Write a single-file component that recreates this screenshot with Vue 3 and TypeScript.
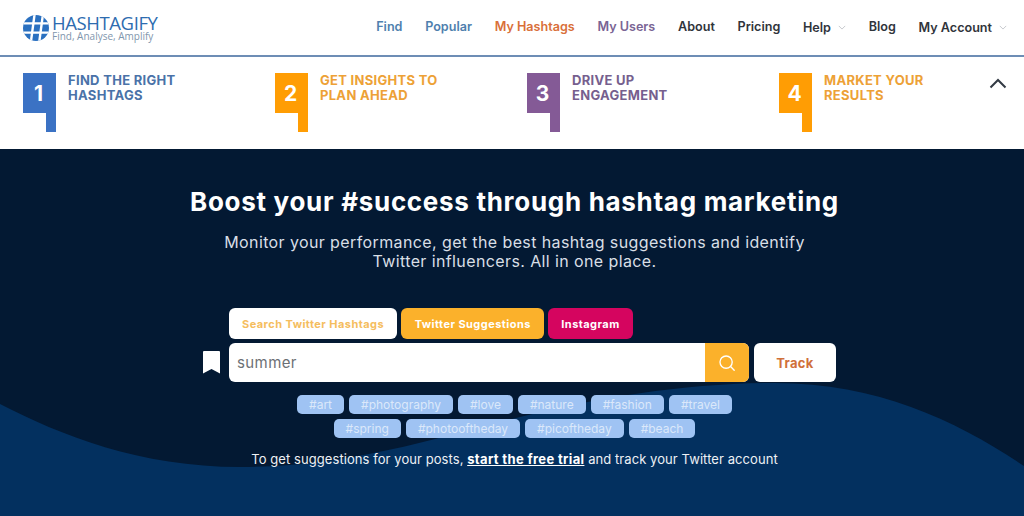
<template>
  <div class="page">
    <header class="topbar">
      <a class="logo">
        <svg class="logo-mark" viewBox="0 0 28 28" width="26" height="26">
          <defs>
            <clipPath id="globe"><circle cx="14" cy="14" r="14" /></clipPath>
          </defs>
          <g clip-path="url(#globe)">
            <rect width="28" height="28" fill="#2a70c0" />
            <path d="M12.5 -1 L8.5 29 M21.5 -1 L17.5 29" stroke="#fff" stroke-width="2.6" />
            <path d="M-1 9 H29 M-1 19 H29" stroke="#fff" stroke-width="2.6" />
          </g>
        </svg>
        <div class="logo-text">
          <span class="logo-name">HASHTAGIFY</span>
          <span class="logo-tag">Find, Analyse, Amplify</span>
        </div>
      </a>
      <nav class="nav">
        <a
          v-for="item in navItems"
          :key="item.label"
          class="nav-item"
          :class="[item.tone, { 'has-caret': item.caret }]"
        >
          {{ item.label }}
          <svg v-if="item.caret" class="caret" viewBox="0 0 10 6" width="8" height="5">
            <path d="M1 1 L5 5 L9 1" fill="none" stroke="#c4c8cc" stroke-width="1.2" />
          </svg>
        </a>
      </nav>
    </header>

    <section class="steps">
      <div v-for="step in steps" :key="step.num" class="step" :class="step.tone">
        <div class="flag">
          <div class="flag-box">{{ step.num }}</div>
          <div class="flag-tail"></div>
        </div>
        <p class="step-text">{{ step.line1 }}<br />{{ step.line2 }}</p>
      </div>
      <svg class="collapse" viewBox="0 0 18 11" width="18" height="11">
        <path d="M1.5 9.5 L9 2 L16.5 9.5" fill="none" stroke="#333a44" stroke-width="2" />
      </svg>
    </section>

    <main class="hero">
      <svg class="wave" viewBox="0 0 1024 133" preserveAspectRatio="none">
        <path
          d="M0 21 C60 52 140 84 240 84 C350 84 430 56 520 34 C600 14 690 0 775 0 C880 0 960 40 1024 83 V133 H0 Z"
          fill="#03305f"
        />
      </svg>
      <div class="hero-inner">
        <h1 class="title">Boost your #success through hashtag marketing</h1>
        <p class="subtitle">
          Monitor your performance, get the best hashtag suggestions and identify<br />
          Twitter influencers. All in one place.
        </p>

        <div class="search">
          <div class="tabs">
            <button class="tab tab-active">Search Twitter Hashtags</button>
            <button class="tab tab-amber">Twitter Suggestions</button>
            <button class="tab tab-pink">Instagram</button>
          </div>
          <div class="search-row">
            <svg class="bookmark" viewBox="0 0 17 23" width="17" height="23">
              <path d="M0 1 Q0 0 1 0 H16 Q17 0 17 1 V22.5 L8.5 18 L0 22.5 Z" fill="#fff" />
            </svg>
            <div class="field">
              <span class="field-text">summer</span>
              <button class="field-btn">
                <svg viewBox="0 0 20 20" width="18" height="18">
                  <circle cx="9" cy="9" r="6.8" fill="none" stroke="#fff" stroke-width="1.5" />
                  <path d="M14 14 L18 18" stroke="#fff" stroke-width="1.5" stroke-linecap="round" />
                </svg>
              </button>
            </div>
            <button class="track">Track</button>
          </div>
        </div>

        <div class="tags">
          <div v-for="(row, i) in tagRows" :key="i" class="tag-row">
            <span v-for="tag in row" :key="tag" class="tag">{{ tag }}</span>
          </div>
        </div>

        <p class="trial">
          To get suggestions for your posts, <a class="trial-link">start the free trial</a> and track your Twitter account
        </p>
      </div>
    </main>
  </div>
</template>

<script setup lang="ts">
const navItems = [
  { label: 'Find', tone: 'blue' },
  { label: 'Popular', tone: 'blue' },
  { label: 'My Hashtags', tone: 'orange' },
  { label: 'My Users', tone: 'purple' },
  { label: 'About', tone: '' },
  { label: 'Pricing', tone: '' },
  { label: 'Help', tone: '', caret: true },
  { label: 'Blog', tone: '' },
  { label: 'My Account', tone: '', caret: true },
]

const steps = [
  { num: 1, line1: 'FIND THE RIGHT', line2: 'HASHTAGS', tone: 'step-blue' },
  { num: 2, line1: 'GET INSIGHTS TO', line2: 'PLAN AHEAD', tone: 'step-amber' },
  { num: 3, line1: 'DRIVE UP', line2: 'ENGAGEMENT', tone: 'step-purple' },
  { num: 4, line1: 'MARKET YOUR', line2: 'RESULTS', tone: 'step-amber' },
]

const tagRows = [
  ['#art', '#photography', '#love', '#nature', '#fashion', '#travel'],
  ['#spring', '#photooftheday', '#picoftheday', '#beach'],
]
</script>

<style>
html,
body {
  margin: 0;
  background: #031933;
}
</style>

<style scoped>
.page {
  width: 1024px;
  height: 516px;
  overflow: hidden;
  font-family: Inter, "Open Sans", sans-serif;
}

.topbar {
  height: 55px;
  display: flex;
  align-items: center;
  justify-content: space-between;
  padding: 0 17px 0 23px;
  background: #fff;
  border-bottom: 2px solid #6d8db5;
}

.logo {
  display: flex;
  align-items: center;
  gap: 3px;
}

.logo-text {
  display: flex;
  flex-direction: column;
}

.logo-name {
  font-family: "Open Sans", sans-serif;
  font-size: 18.5px;
  line-height: 17px;
  letter-spacing: -0.4px;
  color: #2d6cb0;
}

.logo-tag {
  font-family: "Open Sans", sans-serif;
  font-size: 10px;
  line-height: 11px;
  color: #7f96ad;
}

.nav {
  display: flex;
  align-items: center;
  gap: 22.7px;
}

.nav-item {
  font-size: 12.6px;
  font-weight: 600;
  color: #30343b;
  display: flex;
  align-items: center;
  gap: 7px;
  margin-top: -2px;
}

.has-caret {
  margin-top: 0;
}

.blue { color: #4f7fae; }
.orange { color: #d9703a; }
.purple { color: #7a6494; }

.steps {
  position: relative;
  height: 92px;
  display: grid;
  grid-template-columns: repeat(4, 252px);
  padding: 16px 0 0 23px;
  box-sizing: border-box;
  background: #fff;
}

.step {
  display: flex;
  gap: 12px;
}

.flag {
  width: 33px;
}

.flag-box {
  height: 40px;
  padding-right: 2px;
  box-sizing: border-box;
  display: flex;
  align-items: center;
  justify-content: center;
  font-size: 21px;
  font-weight: 700;
  color: #fff;
}

.flag-tail {
  width: 10px;
  height: 19px;
  margin-left: 23px;
}

.step-text {
  margin: 0;
  font-size: 13px;
  font-weight: 700;
  line-height: 15px;
  letter-spacing: 0.3px;
}

.step-blue .flag-box,
.step-blue .flag-tail { background: #3b72c4; }
.step-blue .step-text { color: #4a72a8; }

.step-amber .flag-box,
.step-amber .flag-tail { background: #ff9d04; }
.step-amber .step-text { color: #eda136; }

.step-purple .flag-box,
.step-purple .flag-tail { background: #845a96; }
.step-purple .step-text { color: #765f8e; }

.collapse {
  position: absolute;
  top: 21px;
  right: 17px;
}

.hero {
  position: relative;
  height: 367px;
  background: #031933;
}

.wave {
  position: absolute;
  left: 0;
  bottom: 0;
  width: 1024px;
  height: 133px;
}

.hero-inner {
  position: relative;
  display: flex;
  flex-direction: column;
  align-items: center;
  padding: 36px 0 0 5px;
}

.title {
  margin: 0;
  font-size: 26px;
  line-height: 34px;
  font-weight: 700;
  letter-spacing: 0.7px;
  color: #fff;
  text-align: center;
}

.subtitle {
  margin: 14px 0 0;
  font-size: 16px;
  font-weight: 400;
  line-height: 19px;
  letter-spacing: 0.39px;
  color: #d9dfe6;
  text-align: center;
}

.search {
  margin-top: 37px;
  margin-left: 11px;
  width: 634px;
}

.tabs {
  display: flex;
  gap: 4px;
  margin-left: 26px;
}

.tab {
  height: 31px;
  padding: 0 13px;
  border: 0;
  border-radius: 6px;
  font-family: inherit;
  font-size: 11px;
  font-weight: 700;
  letter-spacing: 0.45px;
  color: #fff;
}

.tab-active {
  background: #fff;
  color: #f5bd5e;
}

.tab-amber {
  padding: 0 13.5px;
  background: #fbb12b;
}

.tab-pink { background: #d5055f; }

.search-row {
  display: flex;
  align-items: center;
  margin-top: 4px;
}

.bookmark {
  margin-right: 9px;
}

.field {
  width: 520px;
  height: 39px;
  display: flex;
  align-items: center;
  justify-content: space-between;
  background: #fff;
  border-radius: 6px;
  overflow: hidden;
}

.field-text {
  padding-left: 8px;
  font-size: 15px;
  letter-spacing: 0.4px;
  color: #6c7075;
}

.field-btn {
  width: 44px;
  height: 39px;
  display: flex;
  align-items: center;
  justify-content: center;
  padding: 0;
  border: 0;
  background: #fbb12b;
}

.track {
  width: 82px;
  height: 39px;
  margin-left: 5px;
  border: 0;
  border-radius: 6px;
  background: #fff;
  font-family: inherit;
  font-size: 13px;
  font-weight: 700;
  letter-spacing: 0.3px;
  color: #d0703a;
}

.tags {
  margin-top: 13px;
  display: flex;
  flex-direction: column;
  gap: 5px;
}

.tag-row {
  display: flex;
  justify-content: center;
  gap: 5px;
}

.tag {
  height: 19px;
  padding: 0 12px;
  display: flex;
  align-items: center;
  border-radius: 5px;
  background: #9fc3f3;
  font-size: 12px;
  color: #dbe8fa;
}

.trial {
  margin: 12px 0 0;
  font-size: 13px;
  line-height: 18px;
  letter-spacing: 0.07px;
  color: #eef1f5;
}

.trial-link {
  font-weight: 700;
  letter-spacing: 0.35px;
  color: #fff;
  text-decoration: underline;
}
</style>
